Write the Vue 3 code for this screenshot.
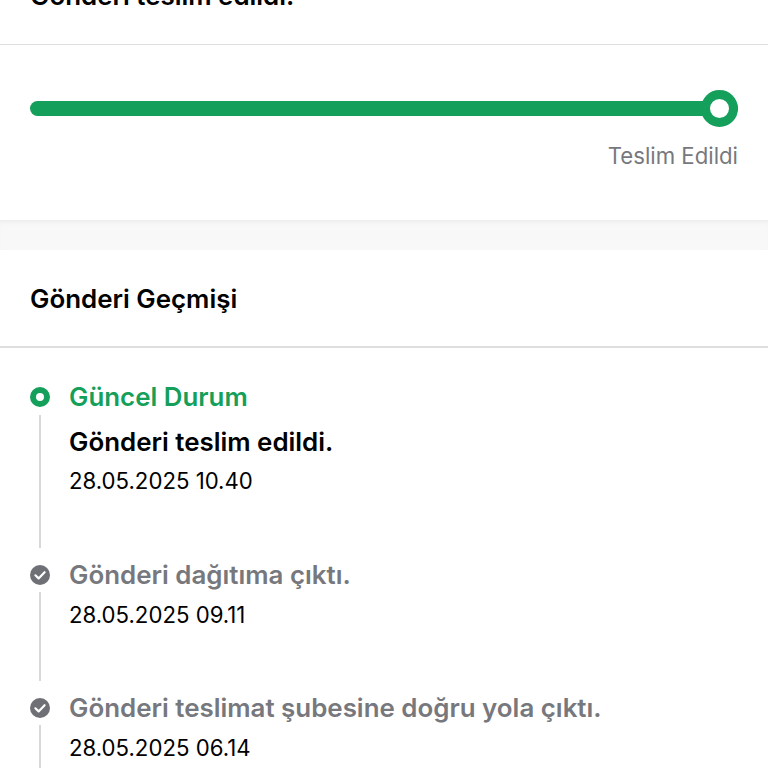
<template>
  <div class="page">
    <header class="top">
      <h1 class="top-title">Gönderi teslim edildi.</h1>
    </header>

    <section class="progress">
      <div class="bar">
        <div class="bar-fill"></div>
        <div class="bar-knob"></div>
      </div>
      <div class="bar-label">Teslim Edildi</div>
    </section>

    <div class="spacer"></div>

    <section class="history">
      <h2 class="history-title">Gönderi Geçmişi</h2>
      <ul class="timeline">
        <li class="step current">
          <div class="rail">
            <span class="dot-current"></span>
            <span class="line"></span>
          </div>
          <div class="body">
            <div class="current-label">Güncel Durum</div>
            <div class="current-text">Gönderi teslim edildi.</div>
            <div class="date">28.05.2025 10.40</div>
          </div>
        </li>
        <li v-for="step in steps" :key="step.date" class="step">
          <div class="rail">
            <svg class="check" width="20" height="20" viewBox="0 0 20 20">
              <circle cx="10" cy="10" r="10" fill="#6f7075" />
              <path d="M5.4 10.3l3.2 3.1 6-6.2" fill="none" stroke="#fff" stroke-width="2.2" stroke-linecap="round" stroke-linejoin="round" />
            </svg>
            <span class="line"></span>
          </div>
          <div class="body">
            <div class="step-text">{{ step.text }}</div>
            <div class="date">{{ step.date }}</div>
          </div>
        </li>
      </ul>
    </section>
  </div>
</template>

<script setup>
const steps = [
  { text: "Gönderi dağıtıma çıktı.", date: "28.05.2025 09.11" },
  { text: "Gönderi teslimat şubesine doğru yola çıktı.", date: "28.05.2025 06.14" }
];
</script>

<style>
html,
body {
  margin: 0;
  background: #fff;
  overflow: hidden;
}
</style>

<style scoped>
.page {
  width: 768px;
  height: 768px;
  overflow: hidden;
  font-family: Inter, "Liberation Sans", sans-serif;
  color: #000;
}

.top {
  margin-top: -19px;
  height: 64px;
  padding: 0 30px;
  box-sizing: border-box;
  border-bottom: 1px solid #dedede;
}

.top-title {
  margin: 0;
  font-size: 25.9px;
  line-height: 29px;
  font-weight: 600;
}

.progress {
  height: 175px;
  padding: 45px 30px 0;
  box-sizing: border-box;
}

.bar {
  position: relative;
  height: 37px;
  display: flex;
  align-items: center;
}

.bar-fill {
  width: 100%;
  height: 15px;
  background: #149f5b;
  border-radius: 8px;
}

.bar-knob {
  position: absolute;
  right: 0;
  top: 0;
  width: 19px;
  height: 19px;
  border: 9px solid #149f5b;
  border-radius: 50%;
  background: #fff;
}

.bar-label {
  margin-top: 16px;
  text-align: right;
  font-size: 22.2px;
  line-height: 26px;
  color: #77787d;
}

.spacer {
  height: 30px;
  background: #f8f8f8;
  box-shadow: inset 0 4px 4px -2px #ececec;
}

.history-title {
  margin: 0;
  height: 98px;
  padding: 0 30px;
  box-sizing: border-box;
  border-bottom: 2px solid #dedede;
  display: flex;
  align-items: center;
  font-size: 25.9px;
  font-weight: 600;
}

.timeline {
  list-style: none;
  margin: 0;
  padding: 37px 30px 0;
}

.step {
  display: flex;
  gap: 19px;
  height: 133px;
}

.step.current {
  height: 178px;
}

.rail {
  width: 20px;
  display: flex;
  flex-direction: column;
  align-items: center;
  gap: 7px;
  padding-top: 2px;
}

.dot-current {
  width: 8px;
  height: 8px;
  flex: none;
  margin-bottom: 1px;
  border: 6px solid #149f5b;
  border-radius: 50%;
}

.check {
  flex: none;
}

.line {
  width: 2px;
  flex: 1;
  margin-bottom: 15px;
  background: #d8d8d8;
}

.body {
  flex: 1;
  margin-top: -3px;
}

.current-label {
  font-size: 25.9px;
  line-height: 29px;
  font-weight: 600;
  color: #149f5b;
}

.current-text {
  margin-top: 16px;
  font-size: 25.9px;
  line-height: 29px;
  font-weight: 600;
}

.step-text {
  font-size: 25.9px;
  line-height: 29px;
  font-weight: 600;
  color: #77787d;
}

.date {
  margin-top: 12px;
  font-size: 22.2px;
  line-height: 27px;
}

.current .date {
  margin-top: 11px;
}
</style>
